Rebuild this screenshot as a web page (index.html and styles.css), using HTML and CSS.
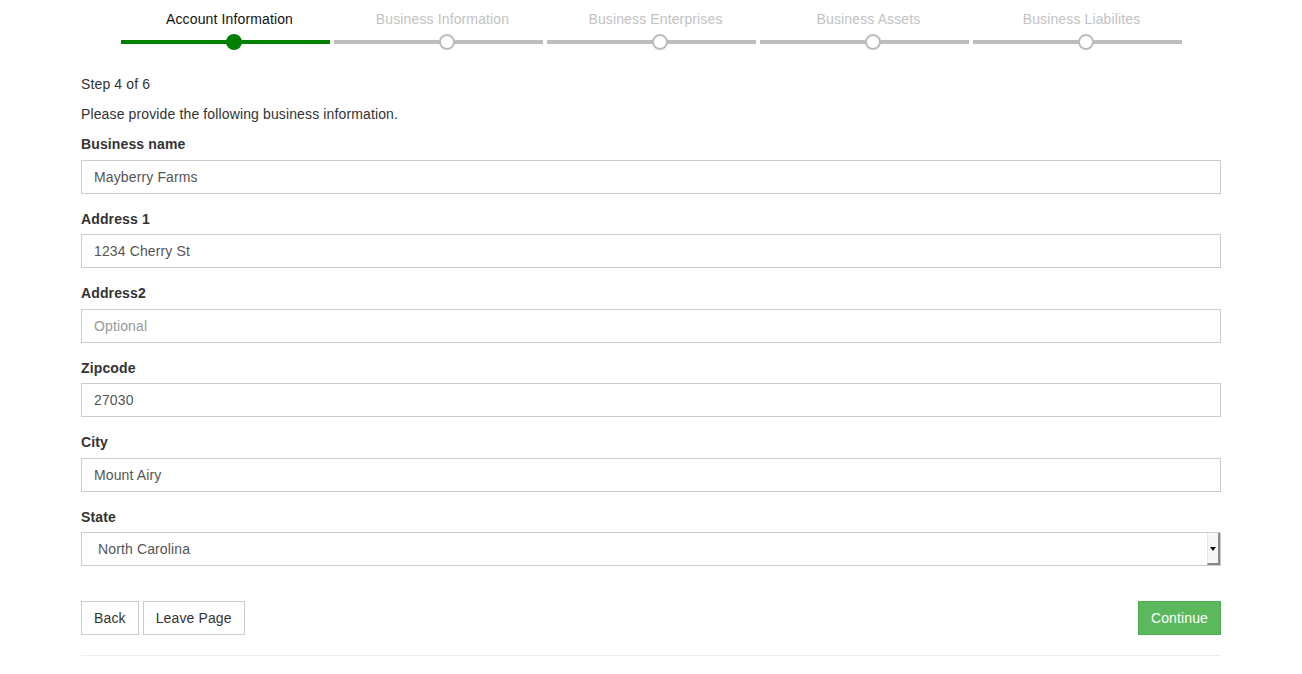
FILE: index.html
```html
<!DOCTYPE html>
<html lang="en">
<head>
<meta charset="UTF-8" />
<meta name="viewport" content="width=device-width, initial-scale=1" />
<title>Business Information</title>
<link rel="stylesheet" href="styles.css">
</head>
<body>

<div class="container">
  <ul class="stepper">
    <li class="step active">
      <div class="step-title">Account Information</div>
      <div class="step-track"><span class="dot"></span></div>
    </li>
    <li class="step">
      <div class="step-title">Business Information</div>
      <div class="step-track"><span class="dot"></span></div>
    </li>
    <li class="step">
      <div class="step-title">Business Enterprises</div>
      <div class="step-track"><span class="dot"></span></div>
    </li>
    <li class="step">
      <div class="step-title">Business Assets</div>
      <div class="step-track"><span class="dot"></span></div>
    </li>
    <li class="step">
      <div class="step-title">Business Liabilites</div>
      <div class="step-track"><span class="dot"></span></div>
    </li>
  </ul>

  <p class="step-count">Step 4 of 6</p>
  <p>Please provide the following business information.</p>

  <form>
    <div class="form-group">
      <label for="bizname">Business name</label>
      <input id="bizname" class="form-control" type="text" value="Mayberry Farms">
    </div>
    <div class="form-group">
      <label for="addr1">Address 1</label>
      <input id="addr1" class="form-control" type="text" value="1234 Cherry St">
    </div>
    <div class="form-group">
      <label for="addr2">Address2</label>
      <input id="addr2" class="form-control" type="text" placeholder="Optional">
    </div>
    <div class="form-group">
      <label for="zip">Zipcode</label>
      <input id="zip" class="form-control" type="text" value="27030">
    </div>
    <div class="form-group">
      <label for="city">City</label>
      <input id="city" class="form-control" type="text" value="Mount Airy">
    </div>
    <div class="form-group">
      <label for="state">State</label>
      <div class="select-wrap">
        <select id="state" class="form-control">
          <option>North Carolina</option>
          <option>South Carolina</option>
          <option>Virginia</option>
        </select>
        <span class="select-arrow"></span>
      </div>
    </div>

    <div class="actions">
      <div class="actions-left">
        <button type="button" class="btn">Back</button>
        <button type="button" class="btn">Leave Page</button>
      </div>
      <button type="button" class="btn btn-success">Continue</button>
    </div>
  </form>

  <hr>
</div>

</body>
</html>
```

FILE: styles.css
```css
body {
  margin: 0;
  font-family: 'Liberation Sans', Arial, sans-serif;
  font-size: 14px;
  line-height: 20px;
  letter-spacing: 0.13px;
  color: #333;
  background: #fff;
}
.container {
  width: 1140px;
  margin: 0 auto;
}
.stepper {
  list-style: none;
  margin: 0 0 0 40px;
  padding: 0;
  display: flex;
  gap: 4px;
}
.step {
  width: 209px;
}
.step-title {
  padding: 9px 0 0 8px;
  text-align: center;
  color: #c2c2c2;
}
.step.active .step-title {
  color: #111;
}
.step-track {
  position: relative;
  margin-top: 11px;
  height: 4px;
  background: #bdbdbd;
}
.step.active .step-track {
  background: #008000;
}
.dot {
  position: absolute;
  left: 50%;
  top: -6px;
  width: 12px;
  height: 12px;
  border: 2px solid #bdbdbd;
  border-radius: 50%;
  background: #fff;
}
.step.active .dot {
  border-color: #008000;
  background: #008000;
}
p {
  margin: 0 0 10px;
}
.step-count {
  margin-top: 30px;
}
.form-group {
  margin-bottom: 15px;
}
label {
  display: block;
  font-weight: bold;
  margin-bottom: 5.5px;
}
.form-control {
  display: block;
  box-sizing: border-box;
  width: 100%;
  height: 34px;
  padding: 6px 12px;
  font-family: inherit;
  font-size: 14px;
  letter-spacing: 0.13px;
  color: #555;
  background: #fff;
  border: 1px solid #ccc;
  border-radius: 0;
  outline: none;
}
.form-control::placeholder {
  color: #999;
}
.select-wrap {
  position: relative;
}
select.form-control {
  appearance: none;
  -webkit-appearance: none;
  padding-left: 16px;
}
.select-arrow {
  position: absolute;
  right: 1px;
  top: 1px;
  width: 10px;
  height: 30px;
  background: #f7f7f7;
  border-left: 1px solid #e6e6e6;
  border-right: 2px solid #888;
  border-bottom: 2px solid #888;
}
.select-arrow::after {
  content: '';
  position: absolute;
  left: 2px;
  top: 14px;
  border-left: 3px solid transparent;
  border-right: 3px solid transparent;
  border-top: 4px solid #111;
}
.actions {
  display: flex;
  justify-content: space-between;
  margin-top: 35px;
}
.actions-left {
  display: flex;
  gap: 4px;
}
.btn {
  height: 34px;
  padding: 6px 12px;
  font-family: inherit;
  font-size: 14px;
  line-height: 20px;
  letter-spacing: 0.13px;
  color: #333;
  background: #fff;
  border: 1px solid #ccc;
  border-radius: 0;
  cursor: pointer;
}
.btn-success {
  color: #fff;
  background: #5cb85c;
  border-color: #4cae4c;
}
hr {
  margin: 20px 0;
  border: 0;
  border-top: 1px solid #eee;
}
```
